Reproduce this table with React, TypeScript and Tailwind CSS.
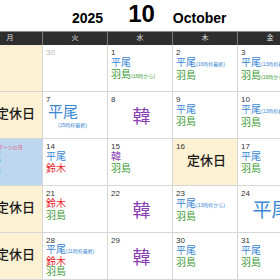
import React from 'react';

type Entry = { name: string; color: string; note?: string };

type Cell =
  | { kind: 'list'; day: number; entries: Entry[]; dim?: boolean; tight?: boolean }
  | { kind: 'big'; day: number; name: string; color: string; size: string; note?: string }
  | { kind: 'closed'; day: number; edge?: boolean }
  | { kind: 'blank'; day: number }
  | { kind: 'holiday'; day: number; label: string; entries: Entry[] };

const BLUE = 'text-[#3a88d4]';
const GREEN = 'text-[#3d9b35]';
const RED = 'text-[#e8262a]';
const PURPLE = 'text-[#8a3fb3]';

const hirao = (note?: string): Entry => ({ name: '平尾', color: BLUE, note });
const hashima = (note?: string): Entry => ({ name: '羽島', color: GREEN, note });
const suzuki: Entry = { name: '鈴木', color: RED };
const kan: Entry = { name: '韓', color: PURPLE };

const weeks: Cell[][] = [
  [
    { kind: 'blank', day: 29 },
    { kind: 'list', day: 30, entries: [], dim: true },
    { kind: 'list', day: 1, entries: [hirao(), hashima('(16時から)')] },
    { kind: 'list', day: 2, entries: [hirao('(16時枠最終)'), hashima()] },
    { kind: 'list', day: 3, entries: [hirao('(13時枠最終)'), hashima('(16時から)')] },
  ],
  [
    { kind: 'closed', day: 6, edge: true },
    { kind: 'big', day: 7, name: '平尾', color: BLUE, size: 'text-[15px]', note: '(15時枠最終)' },
    { kind: 'big', day: 8, name: '韓', color: PURPLE, size: 'text-[18px]' },
    { kind: 'list', day: 9, entries: [hirao(), hashima()] },
    { kind: 'list', day: 10, entries: [hirao('(13時枠最終)'), hashima()] },
  ],
  [
    { kind: 'holiday', day: 13, label: 'スポーツの日', entries: [hirao(), hashima()] },
    { kind: 'list', day: 14, entries: [hirao(), suzuki] },
    { kind: 'list', day: 15, entries: [kan, hashima()] },
    { kind: 'closed', day: 16 },
    { kind: 'list', day: 17, entries: [hirao(), hashima()] },
  ],
  [
    { kind: 'closed', day: 20, edge: true },
    { kind: 'list', day: 21, entries: [suzuki, hashima()] },
    { kind: 'big', day: 22, name: '韓', color: PURPLE, size: 'text-[18px]' },
    { kind: 'list', day: 23, entries: [hirao('(13時枠から)'), hashima()] },
    { kind: 'big', day: 24, name: '平尾', color: BLUE, size: 'text-[19px]' },
  ],
  [
    { kind: 'closed', day: 27, edge: true },
    { kind: 'list', day: 28, entries: [hirao('(11時枠最終)'), suzuki, hashima()], tight: true },
    { kind: 'big', day: 29, name: '韓', color: PURPLE, size: 'text-[18px]' },
    { kind: 'list', day: 30, entries: [hirao(), hashima()] },
    { kind: 'list', day: 31, entries: [hirao(), hashima()] },
  ],
];

const dayNames = ['月', '火', '水', '木', '金'];

function DayNum({ day, dim }: { day: number; dim?: boolean }) {
  return (
    <div className={`text-[8px] leading-[9px] ${dim ? 'text-[#b5b5b5]' : 'text-[#333]'}`}>{day}</div>
  );
}

function CalendarCell({ cell }: { cell: Cell }) {
  const base = 'h-[47px] border-r border-b border-[#d6d6d6] pt-[3px] pl-[3px] overflow-hidden';

  if (cell.kind === 'blank') {
    return <div className={`${base} bg-[#fdf1d3]`} />;
  }

  if (cell.kind === 'closed') {
    return (
      <div className={`${base} bg-[#fdf1d3]`}>
        <DayNum day={cell.day} />
        <div
          className={`mt-[2px] text-center text-[13px] leading-[15px] text-[#1a1a1a] font-medium ${
            cell.edge ? 'pl-[8px]' : ''
          }`}
        >
          定休日
        </div>
      </div>
    );
  }

  if (cell.kind === 'holiday') {
    return (
      <div className={`${base} bg-[#bdd7ee]`}>
        <div className="flex items-baseline gap-[3px]">
          <DayNum day={cell.day} />
          <span className="text-[5px] leading-[9px] text-[#e2577c]">{cell.label}</span>
        </div>
        {cell.entries.map((e, i) => (
          <div key={i} className={`text-[10px] leading-[12px] ${e.color}`}>
            {e.name}
          </div>
        ))}
      </div>
    );
  }

  if (cell.kind === 'big') {
    if (cell.note) {
      return (
        <div className={`${base} bg-white flex flex-col`}>
          <DayNum day={cell.day} />
          <div className="flex-1 flex flex-col items-start justify-center pb-[9px] pl-[2px]">
            <div className={`${cell.size} leading-none ${cell.color}`}>{cell.name}</div>
            <div className="text-[5px] leading-[7px] mt-[3px] ml-[10px] text-[#3a88d4]">{cell.note}</div>
          </div>
        </div>
      );
    }
    return (
      <div className={`${base} bg-white flex flex-col`}>
        <DayNum day={cell.day} />
        <div className="flex-1 flex items-center justify-center pb-[9px]">
          <div className={`${cell.size} leading-none ${cell.color}`}>{cell.name}</div>
        </div>
      </div>
    );
  }

  return (
    <div className={`${base} bg-white`}>
      <DayNum day={cell.day} dim={cell.dim} />
      {cell.entries.map((e, i) => (
        <div
          key={i}
          className={`${cell.tight ? 'leading-[10.5px]' : 'leading-[12px]'} text-[10px] whitespace-nowrap ${e.color}`}
        >
          {e.name}
          {e.note && <span className="text-[5px]">{e.note}</span>}
        </div>
      ))}
    </div>
  );
}

export default function App() {
  return (
    <div
      className="w-[280px] h-[280px] overflow-hidden bg-white"
      style={{ fontFamily: '"Liberation Sans", "Noto Sans CJK JP", sans-serif' }}
    >
      <div className="h-[31px] flex items-end pb-[6px] pl-[72px] font-bold text-black">
        <span className="text-[14px] leading-none">2025</span>
        <span className="text-[24px] leading-none ml-[25px] mb-[-1px]">10</span>
        <span className="text-[14px] leading-none ml-[18px]">October</span>
      </div>
      <div className="ml-[-22px] w-[325px]">
        <div className="grid grid-cols-[repeat(5,65px)] h-[14px] bg-[#2e2e2e] border-t border-[#8a8a8a]">
          {dayNames.map((d) => (
            <div
              key={d}
              className="border-r border-[#7a7a7a] flex items-center justify-center text-[7px] text-[#e0e0e0]"
            >
              {d}
            </div>
          ))}
        </div>
        {weeks.map((week, wi) => (
          <div key={wi} className="grid grid-cols-[repeat(5,65px)]">
            {week.map((cell, ci) => (
              <CalendarCell key={ci} cell={cell} />
            ))}
          </div>
        ))}
      </div>
    </div>
  );
}
